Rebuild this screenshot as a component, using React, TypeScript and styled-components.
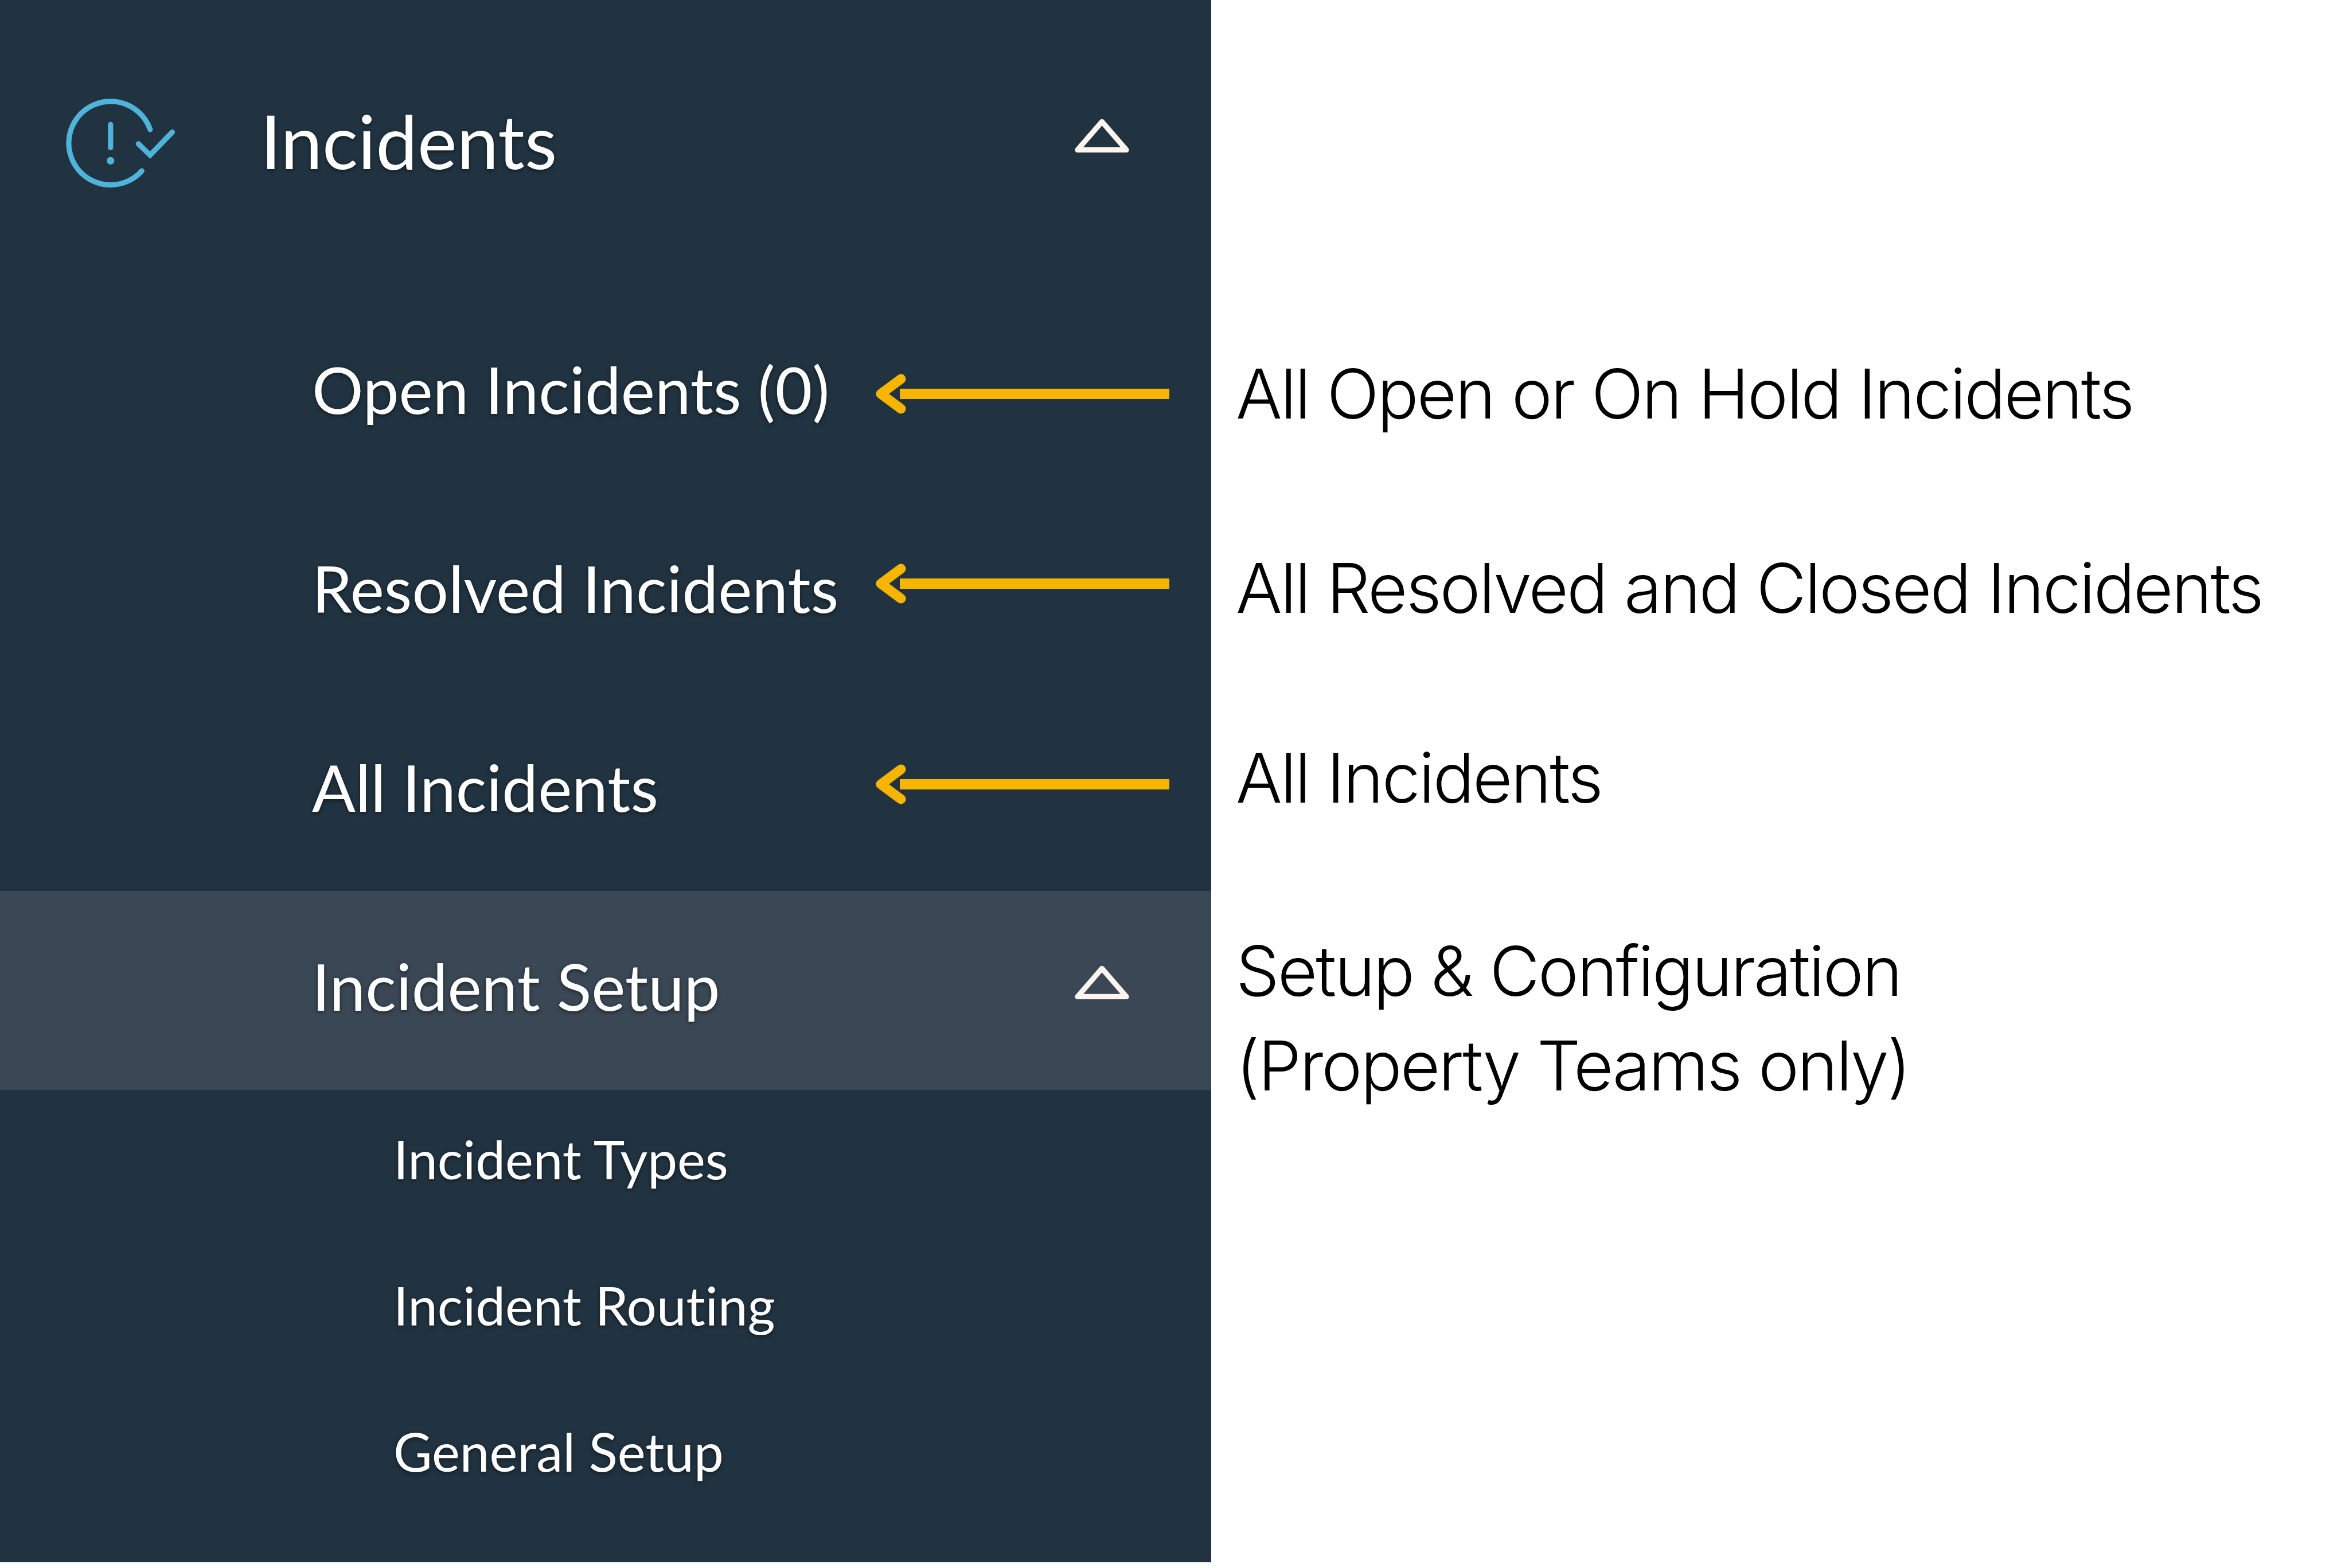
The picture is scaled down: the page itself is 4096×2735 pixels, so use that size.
import React from "react";
import styled, { createGlobalStyle } from "styled-components";

const Global = createGlobalStyle`
  html, body { margin: 0; padding: 0; background: #ffffff; }
  #root { width: 4096px; height: 2735px; overflow: hidden; }
`;

const Page = styled.div`
  display: flex;
  width: 4096px;
  height: 2735px;
  background: #ffffff;
`;

const Sidebar = styled.nav`
  width: 2112px;
  height: 2725px;
  flex: none;
  background: #213341;
  font-family: Lato, "Open Sans", sans-serif;
  font-variant-ligatures: none;
  color: #ffffff;
  text-shadow: 0 2px 7px rgba(0, 0, 0, 0.55);
`;

const Header = styled.header`
  display: flex;
  align-items: center;
  height: 513px;
  padding: 0 0 12px 112px;
  box-sizing: border-box;
`;

const AppIcon = styled.svg`
  width: 197px;
  height: 161px;
  flex: none;
`;

const HeaderTitle = styled.h1`
  flex: 1;
  margin: 0 0 12px 145px;
  font-size: 130px;
  font-weight: 400;
`;

const Chevron = styled.svg`
  width: 97px;
  height: 61px;
  flex: none;
  margin: 0 142px 26px 0;
`;

const NavRow = styled.div<{ $active?: boolean }>`
  display: flex;
  align-items: center;
  height: 347px;
  padding-left: 544px;
  box-sizing: border-box;
  background: ${(p) => (p.$active ? "#3a4855" : "transparent")};
`;

const NavLabel = styled.span`
  flex: 1;
  margin-bottom: 16px;
  font-size: 112px;
  font-weight: 400;
  letter-spacing: 0.1px;
`;

const Arrow = styled.svg<{ $shift: number }>`
  width: 512px;
  height: 72px;
  flex: none;
  margin-right: 73px;
  transform: translateY(${(p) => p.$shift}px);
`;

const SubRow = styled.div`
  display: flex;
  align-items: center;
  height: 255px;
  padding: 0 0 14px 686px;
  box-sizing: border-box;
  font-size: 92.5px;
  font-weight: 400;
`;

const Notes = styled.section`
  flex: 1;
  padding: 513px 0 0 43px;
  font-family: Inter, "Liberation Sans", sans-serif;
  font-size: 120px;
  font-weight: 300;
  letter-spacing: -3px;
  color: #000000;
`;

const Note = styled.div<{ $shift: number }>`
  display: flex;
  flex-direction: column;
  justify-content: center;
  height: 347px;
  line-height: 165px;
  white-space: nowrap;
  transform: translateY(${(p) => p.$shift}px);
`;

const ArrowIcon = ({ shift }: { shift: number }) => (
  <Arrow $shift={shift} viewBox="0 0 512 72" aria-hidden="true">
    <path d="M512 27H42V45H512Z" fill="#f7b500" />
    <path d="M44 10 9 36 44 62" fill="none" stroke="#f7b500" strokeWidth="17" strokeLinecap="round" strokeLinejoin="round" />
  </Arrow>
);

const ChevronIcon = () => (
  <Chevron viewBox="0 0 148 93" aria-hidden="true">
    <path d="M74 8 9 83H139Z" fill="none" stroke="#fdf6ef" strokeWidth="14" strokeLinejoin="round" />
  </Chevron>
);

export default function App() {
  return (
    <Page>
      <Global />
      <Sidebar>
        <Header>
          <AppIcon viewBox="70 75 300 245" aria-hidden="true">
            <g fill="none" stroke="#4fb4da" strokeWidth="14" strokeLinecap="round" strokeLinejoin="miter">
              <path d="M298 160A111 111 0 1 0 276 270" />
              <path d="M193 147V208" />
              <path d="M267 198 298 228 357 167" />
            </g>
            <circle cx="193" cy="243" r="10" fill="#4fb4da" />
          </AppIcon>
          <HeaderTitle>Incidents</HeaderTitle>
          <ChevronIcon />
        </Header>
        <NavRow>
          <NavLabel>Open Incidents (0)</NavLabel>
          <ArrowIcon shift={0} />
        </NavRow>
        <NavRow>
          <NavLabel>Resolved Incidents</NavLabel>
          <ArrowIcon shift={-16} />
        </NavRow>
        <NavRow>
          <NavLabel>All Incidents</NavLabel>
          <ArrowIcon shift={-13} />
        </NavRow>
        <NavRow $active>
          <NavLabel>Incident Setup</NavLabel>
          <ChevronIcon />
        </NavRow>
        <SubRow>Incident Types</SubRow>
        <SubRow>Incident Routing</SubRow>
        <SubRow>General Setup</SubRow>
      </Sidebar>
      <Notes>
        <Note $shift={0}>All Open or On Hold Incidents</Note>
        <Note $shift={-8}>All Resolved and Closed Incidents</Note>
        <Note $shift={-24}>All Incidents</Note>
        <Note $shift={48}>
          <span>Setup &amp; Configuration</span>
          <span>(Property Teams only)</span>
        </Note>
      </Notes>
    </Page>
  );
}
